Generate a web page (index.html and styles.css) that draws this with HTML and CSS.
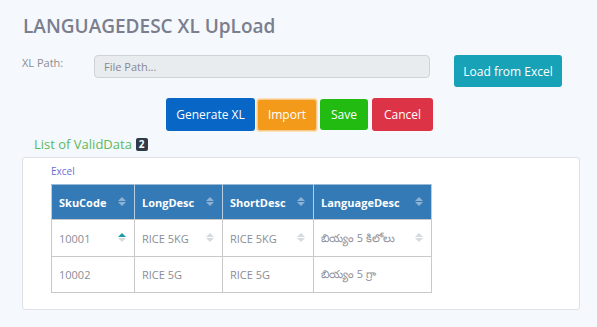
FILE: index.html
```html
<!DOCTYPE html>
<html lang="en">
<head>
    <meta charset="UTF-8">
    <meta name="viewport" content="width=device-width, initial-scale=1.0">
    <title>LANGUAGEDESC XL UpLoad</title>
    <link rel="stylesheet" href="styles.css">
</head>
<body>

<div class="page">
    <h1 class="page-title">LANGUAGEDESC XL UpLoad</h1>

    <div class="path-row">
        <label class="path-label" for="xlPath">XL Path:</label>
        <input type="text" id="xlPath" class="path-input" placeholder="File Path..." disabled>
        <button class="btn btn-info">Load from Excel</button>
    </div>

    <div class="action-row">
        <button class="btn btn-primary">Generate XL</button>
        <button class="btn btn-warning">Import</button>
        <button class="btn btn-success">Save</button>
        <button class="btn btn-danger">Cancel</button>
    </div>

    <div class="list-title">List of ValidData <span class="badge">2</span></div>

    <div class="card">
        <div class="card-caption">Excel</div>
        <table class="grid">
            <thead>
                <tr>
                    <th class="col-sku">SkuCode <span class="sort sort-up"></span></th>
                    <th class="col-long">LongDesc <span class="sort"></span></th>
                    <th class="col-short">ShortDesc <span class="sort"></span></th>
                    <th class="col-lang">LanguageDesc <span class="sort"></span></th>
                </tr>
            </thead>
            <tbody>
                <tr>
                    <td>10001 <span class="sort sort-up"></span></td>
                    <td>RICE 5KG <span class="sort"></span></td>
                    <td>RICE 5KG <span class="sort"></span></td>
                    <td>బియ్యం 5 కిలోలు <span class="sort"></span></td>
                </tr>
                <tr>
                    <td>10002</td>
                    <td>RICE 5G</td>
                    <td>RICE 5G</td>
                    <td>బియ్యం 5 గ్రా</td>
                </tr>
            </tbody>
        </table>
    </div>
</div>

</body>
</html>
```

FILE: styles.css
```css
body {
    margin: 0;
    padding: 0;
    background: #f5f8fd;
    font-family: "Open Sans", "Noto Sans", sans-serif;
    color: #7a7d87;
}
.page {
    padding: 12px 17px 0 22px;
}
.page-title {
    margin: 0 0 0 1px;
    font-size: 19px;
    font-weight: 600;
    color: #7a7e8e;
    line-height: 28px;
}
.path-row {
    display: flex;
    align-items: flex-start;
    margin-top: 15px;
}
.path-label {
    width: 72px;
    font-size: 11px;
    color: #8a8d96;
    line-height: 16px;
}
.path-input {
    width: 336px;
    height: 23px;
    box-sizing: border-box;
    background: #e9ecef;
    border: 1px solid #cfd3d8;
    border-radius: 4px;
    padding: 0 9px;
    font-family: inherit;
    font-size: 11px;
}
.path-input::placeholder {
    color: #858892;
}
.btn {
    border: none;
    border-radius: 3px;
    color: white;
    font-family: inherit;
    font-size: 12px;
    cursor: pointer;
    padding: 0;
}
.btn-info {
    margin-left: 24px;
    width: 108px;
    height: 32px;
    background: #17a2b8;
}
.action-row {
    display: flex;
    align-items: center;
    gap: 2px;
    margin-top: 11px;
    padding-left: 144px;
}
.btn-primary {
    width: 89px;
    height: 33px;
    background: #0866c6;
}
.btn-warning {
    width: 60px;
    height: 32px;
    background: #f39a1a;
    border: 1px solid #f7c98a;
    box-shadow: 0 0 0 1px #fbe0b8;
}
.btn-success {
    width: 48px;
    height: 31px;
    background: #21bb12;
    margin-left: 1px;
}
.btn-danger {
    width: 61px;
    height: 33px;
    background: #dc3446;
    margin-left: 2px;
}
.list-title {
    margin: 4px 0 0 12px;
    font-size: 13px;
    color: #5cb85c;
    line-height: 18px;
    display: flex;
    align-items: center;
    gap: 4px;
}
.badge {
    background: #2f3b4a;
    color: white;
    font-size: 10px;
    font-weight: 700;
    border-radius: 2px;
    padding: 0 3px;
    line-height: 13px;
}
.card {
    margin-top: 4px;
    background: white;
    border: 1px solid #dde0e4;
    border-radius: 3px;
    height: 153px;
    padding: 6px 0 0 28px;
    box-sizing: border-box;
}
.card-caption {
    font-size: 10px;
    color: #6a6fd6;
    line-height: 14px;
    margin-bottom: 6px;
}
.grid {
    border-collapse: collapse;
    font-size: 11px;
}
.grid th,
.grid td {
    border: 1px solid #c9c9c9;
    padding: 0 7px;
    text-align: left;
    position: relative;
}
.grid th {
    background: #337ab7;
    color: white;
    font-weight: 700;
    height: 34px;
    border-color: #9bbad8 #b7cee4 #c9c9c9;
}
.grid td {
    color: #8a8d96;
    height: 35px;
}
.grid tbody tr:first-child td {
    height: 36px;
}
.col-sku { width: 68px; }
.col-long { width: 73px; }
.col-short { width: 76px; }
.col-lang { width: 103px; }
.sort {
    position: absolute;
    right: 8px;
    top: 50%;
    margin-top: -5px;
    width: 8px;
    height: 10px;
}
.sort::before,
.sort::after {
    content: "";
    position: absolute;
    left: 0;
    border-left: 4px solid transparent;
    border-right: 4px solid transparent;
}
.sort::before {
    top: 0;
    border-bottom: 4px solid #b8c3cf;
}
.sort::after {
    top: 5px;
    border-top: 4px solid #b8c3cf;
}
.grid th .sort::before { border-bottom-color: #8fb2d4; }
.grid th .sort::after { border-top-color: #8fb2d4; }
.grid td .sort::before { border-bottom-color: #d6d9dd; }
.grid td .sort::after { border-top-color: #d6d9dd; }
.grid .sort-up::before { border-bottom-color: #1aa3a8; }
.grid td .sort-up::before { border-bottom-color: #1a9ba8; }
```
